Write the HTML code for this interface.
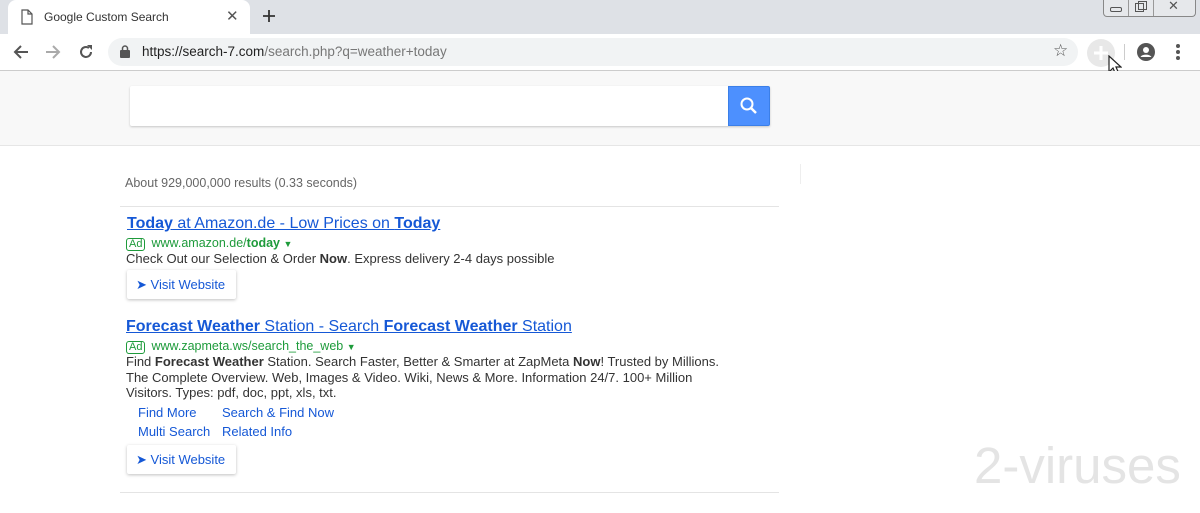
<!DOCTYPE html>
<html><head><meta charset="utf-8"><style>
*{margin:0;padding:0;box-sizing:border-box}
body{width:1200px;height:513px;overflow:hidden;background:#fff;font-family:"Liberation Sans",Arial,sans-serif;position:relative}
.a{position:absolute}
.tabbar{left:0;top:0;width:1200px;height:34px;background:#dee1e6}
.tab{left:8px;top:0;width:242px;height:34px;background:#fff;border-radius:8px 8px 0 0}
.toolbar{left:0;top:34px;width:1200px;height:37px;background:#fff;border-bottom:1px solid #ccc}
.omni{left:108px;top:38px;width:970px;height:28px;background:#f1f3f4;border-radius:14px}
.hdr{left:0;top:71px;width:1200px;height:75px;background:#f8f8f8;border-bottom:1px solid #e6e6e6}
.sbox{left:130px;top:86px;width:640px;height:40px;background:#fff;border-radius:2px;box-shadow:0 1px 2px rgba(0,0,0,.2)}
.sbtn{left:728px;top:86px;width:42px;height:40px;background:#4d90fe;border:1px solid #3b7fe8;border-radius:0 2px 2px 0}
.t{font-size:16px;color:#1558d6;text-decoration:underline;white-space:nowrap}
.u{font-size:12.5px;color:#1e9b3b;white-space:nowrap}
.ad{display:inline-block;border:1px solid #1e9b3b;border-radius:3px;font-size:11px;line-height:11px;padding:0 2px;margin-right:6px}
.d{font-size:13px;color:#333;line-height:15.5px;white-space:nowrap}
.btn{width:109px;height:29px;background:#fff;border-radius:2px;box-shadow:0 1px 3px rgba(0,0,0,.25);font-size:13px;color:#1558d6;padding:7px 0 0 9px;white-space:nowrap}
.sl{font-size:13px;color:#1558d6;white-space:nowrap}
.hr{height:1px;background:#e4e4e4}
</style></head><body>
<div class="a tabbar"></div>
<div class="a tab"></div>
<svg class="a" style="left:20px;top:9px" width="14" height="16" viewBox="0 0 14 16"><path d="M2 1h6l4 4v10H2z M8 1v4h4" fill="none" stroke="#555" stroke-width="1.2"/></svg>
<div class="a" style="left:44px;top:10px;font-size:12px;color:#333">Google Custom Search</div>
<div class="a" style="left:226px;top:7px;font-size:15px;color:#555">✕</div>
<svg class="a" style="left:262px;top:9px" width="14" height="14"><path d="M7 1v12M1 7h12" stroke="#333" stroke-width="1.8"/></svg>
<div class="a" style="left:1103px;top:0;width:93px;height:17px;border:1px solid #888;border-top:none;border-radius:0 0 4px 4px;background:#e6e8eb"></div>
<div class="a" style="left:1128px;top:0;width:1px;height:16px;background:#999"></div>
<div class="a" style="left:1153px;top:0;width:1px;height:16px;background:#999"></div>
<div class="a" style="left:1110px;top:7px;width:12px;height:5px;border:1px solid #555;border-radius:2px"></div>
<div class="a" style="left:1135px;top:3px;width:9px;height:9px;border:1px solid #555"></div>
<div class="a" style="left:1138px;top:1px;width:9px;height:9px;border:1px solid #555"></div>
<div class="a" style="left:1168px;top:-2px;font-size:13px;color:#555">✕</div>
<div class="a toolbar"></div>
<svg class="a" style="left:13px;top:44px" width="16" height="16"><path d="M15 8H2M8 2L2 8l6 6" fill="none" stroke="#555" stroke-width="2"/></svg>
<svg class="a" style="left:45px;top:44px" width="16" height="16"><path d="M1 8h13M8 2l6 6-6 6" fill="none" stroke="#aaa" stroke-width="2"/></svg>
<svg class="a" style="left:78px;top:44px" width="16" height="16"><path d="M13 8a5 5 0 1 1-2-4" fill="none" stroke="#555" stroke-width="2"/><path d="M9 1h5v5z" fill="#555"/></svg>
<div class="a omni"></div>
<svg class="a" style="left:120px;top:45px" width="10" height="13"><rect x="0" y="5" width="10" height="8" rx="1" fill="#555"/><path d="M2.5 6V3.5a2.5 2.5 0 0 1 5 0V6" fill="none" stroke="#555" stroke-width="1.5"/></svg>
<div class="a" style="left:142px;top:44px;font-size:13.5px;color:#777;white-space:nowrap"><span style="color:#222">https://search-7.com</span>/search.php?q=weather+today</div>
<div class="a" style="left:1053px;top:41px;font-size:17px;color:#555">☆</div>
<div class="a" style="left:1087px;top:39px;width:28px;height:28px;border-radius:50%;background:#e8e8e8"></div>
<svg class="a" style="left:1093px;top:45px" width="16" height="16"><path d="M8 1v14M1 8h14" stroke="#fff" stroke-width="3"/></svg>
<svg class="a" style="left:1108px;top:55px" width="14" height="22"><path d="M1 1v16l4-4 3 7 3-1-3-7h5z" fill="#fff" stroke="#222" stroke-width="1.2"/></svg>
<div class="a" style="left:1124px;top:44px;width:1px;height:16px;background:#ccc"></div>
<svg class="a" style="left:1137px;top:43px" width="18" height="18"><circle cx="9" cy="9" r="9" fill="#555"/><circle cx="9" cy="7" r="3" fill="#fff"/><path d="M3.5 14a6 4 0 0 1 11 0" fill="#fff"/></svg>
<div class="a" style="left:1176px;top:44px;width:4px;height:4px;border-radius:50%;background:#555;box-shadow:0 6px #555,0 12px #555"></div>
<div class="a hdr"></div>
<div class="a sbox"></div>
<div class="a sbtn"></div>
<svg class="a" style="left:739px;top:96px" width="20" height="20"><circle cx="8" cy="8" r="5.5" fill="none" stroke="#fff" stroke-width="2"/><path d="M12 12l5 5" stroke="#fff" stroke-width="2.5"/></svg>
<div class="a" style="left:800px;top:164px;width:1px;height:20px;background:#eee"></div>
<div class="a" style="left:125px;top:176px;font-size:12.5px;color:#666">About 929,000,000 results (0.33 seconds)</div>
<div class="a hr" style="left:120px;top:206px;width:659px"></div>
<div class="a t" style="left:127px;top:215px"><b>Today</b> at Amazon.de - Low Prices on <b>Today</b></div>
<div class="a u" style="left:126px;top:236px"><span class="ad">Ad</span>www.amazon.de/<b>today</b> <span style="font-size:9px">▼</span></div>
<div class="a d" style="left:126px;top:251px">Check Out our Selection &amp; Order <b>Now</b>. Express delivery 2-4 days possible</div>
<div class="a btn" style="left:127px;top:270px">➤ Visit Website</div>
<div class="a t" style="left:126px;top:318px"><b>Forecast Weather</b> Station - Search <b>Forecast Weather</b> Station</div>
<div class="a u" style="left:126px;top:339px"><span class="ad">Ad</span>www.zapmeta.ws/search_the_web <span style="font-size:9px">▼</span></div>
<div class="a d" style="left:126px;top:354px">Find <b>Forecast Weather</b> Station. Search Faster, Better &amp; Smarter at ZapMeta <b>Now</b>! Trusted by Millions.<br>The Complete Overview. Web, Images &amp; Video. Wiki, News &amp; More. Information 24/7. 100+ Million<br>Visitors. Types: pdf, doc, ppt, xls, txt.</div>
<div class="a sl" style="left:138px;top:405px">Find More</div>
<div class="a sl" style="left:222px;top:405px">Search &amp; Find Now</div>
<div class="a sl" style="left:138px;top:424px">Multi Search</div>
<div class="a sl" style="left:222px;top:424px">Related Info</div>
<div class="a btn" style="left:127px;top:445px">➤ Visit Website</div>
<div class="a hr" style="left:120px;top:492px;width:659px"></div>
<div class="a" style="left:974px;top:436px;font-size:51px;color:#e4e4e4;white-space:nowrap">2-viruses</div>
</body></html>
